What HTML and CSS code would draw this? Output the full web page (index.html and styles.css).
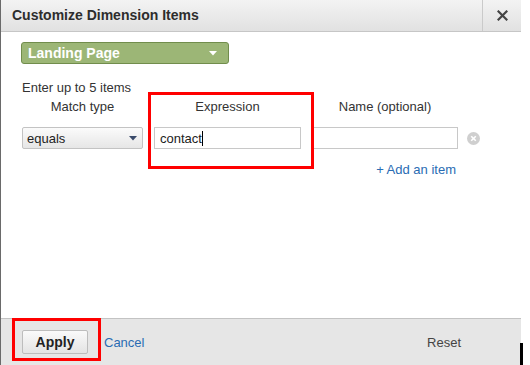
FILE: index.html
```html
<!DOCTYPE html>
<html>
<head>
<meta charset="utf-8">
<link rel="stylesheet" href="styles.css">
</head>
<body>
<div class="dialog">
  <div class="header">
    <div class="title">Customize Dimension Items</div>
    <div class="close">
      <svg width="11" height="11" viewBox="0 0 11 11"><path d="M1.5 1.5 L9.5 9.5 M9.5 1.5 L1.5 9.5" stroke="#444" stroke-width="2.2" stroke-linecap="square"/></svg>
    </div>
  </div>
  <div class="body">
    <div class="dim-btn">
      <span>Landing Page</span>
      <svg width="8" height="5" viewBox="0 0 8 5"><path d="M0 0 H8 L4 4.5 Z" fill="#fff"/></svg>
    </div>
    <div class="hint">Enter up to 5 items</div>
    <div class="grid">
      <div class="label">Match type</div>
      <div class="label">Expression</div>
      <div class="label">Name (optional)</div>
      <div></div>
      <div class="select"><span>equals</span><svg width="8" height="5" viewBox="0 0 8 5"><path d="M0 0 H8 L4 4.5 Z" fill="#3a4a6a"/></svg></div>
      <div class="input"><span>contact</span><span class="caret"></span></div>
      <div class="input"></div>
      <div class="remove"><svg width="13" height="13" viewBox="0 0 13 13"><circle cx="6.5" cy="6.5" r="6.5" fill="#cfcfcf"/><path d="M4.2 4.2 L8.8 8.8 M8.8 4.2 L4.2 8.8" stroke="#fff" stroke-width="1.6"/></svg></div>
    </div>
    <div class="add-row"><span class="add">+ Add an item</span></div>
  </div>
  <div class="footer">
    <button class="apply">Apply</button>
    <span class="cancel">Cancel</span>
    <span class="reset">Reset</span>
  </div>
  <div class="mark mark-expr"></div>
  <div class="mark mark-apply"></div>
</div>
<div class="edge"></div>
</body>
</html>
```
FILE: styles.css
```css
html, body {
  margin: 0;
  padding: 0;
  background: #fff;
  width: 530px;
  height: 365px;
  overflow: hidden;
  font-family: "Liberation Sans", Arial, sans-serif;
  color: #333;
}
.dialog {
  position: relative;
  width: 520px;
  height: 365px;
  border-left: 1px solid #6a6a6a;
  display: flex;
  flex-direction: column;
  background: #fff;
}
.header {
  height: 31px;
  border-bottom: 1px solid #c6c6c6;
  background: linear-gradient(#f3f3f3, #e1e1e1);
  display: flex;
  align-items: stretch;
}
.title {
  flex: 1;
  padding-left: 11px;
  font-size: 14px;
  font-weight: bold;
  color: #2d2d2d;
  line-height: 31px;
}
.close {
  width: 38px;
  border-left: 1px solid #cacaca;
  display: flex;
  align-items: center;
  justify-content: center;
}
.body {
  flex: 1;
  padding: 10px 0 0 20px;
}
.dim-btn {
  box-sizing: border-box;
  width: 208px;
  height: 22px;
  background: #9cb676;
  border: 1px solid #718d4c;
  border-radius: 3px;
  display: flex;
  align-items: center;
  justify-content: space-between;
  padding: 0 11px 0 6px;
  color: #fff;
  font-weight: bold;
  font-size: 14px;
}
.hint {
  margin-top: 16px;
  margin-left: 1px;
  font-size: 13px;
  line-height: 15px;
}
.grid {
  display: grid;
  grid-template-columns: 121px 147px 146px 22px;
  column-gap: 11px;
  margin-left: 1px;
  margin-top: 4px;
  row-gap: 13px;
}
.grid .label {
  text-align: center;
  font-size: 13px;
  line-height: 15px;
}
.select {
  box-sizing: border-box;
  height: 22px;
  border: 1px solid #c3c3c3;
  border-radius: 2px;
  background: linear-gradient(#fbfbfb, #e6e6e6);
  display: flex;
  align-items: center;
  justify-content: space-between;
  padding: 0 5px 0 4px;
  font-size: 13px;
  color: #222;
}
.input {
  box-sizing: border-box;
  height: 22px;
  border: 1px solid #c8c8c8;
  background: #fff;
  display: flex;
  align-items: center;
  padding-left: 5px;
  font-size: 13px;
  color: #222;
}
.caret {
  display: inline-block;
  width: 1px;
  height: 15px;
  background: #000;
}
.remove {
  display: flex;
  align-items: center;
  padding-left: 3px;
  margin-left: -5px;
}
.add-row {
  display: flex;
  justify-content: flex-end;
  width: 435px;
  margin-top: 13px;
}
.add {
  color: #2a6cb3;
  font-size: 13px;
}
.footer {
  height: 46px;
  border-top: 1px solid #c3c3c3;
  background: #e6e6e6;
  display: flex;
  align-items: center;
  padding-left: 21px;
}
.apply {
  width: 66px;
  height: 24px;
  margin: 0;
  padding: 0;
  border: 1px solid #bdbdbd;
  border-radius: 2px;
  background: linear-gradient(#fafafa, #e4e4e4);
  font-family: "Liberation Sans", Arial, sans-serif;
  font-weight: bold;
  font-size: 14px;
  color: #222;
}
.cancel {
  margin-left: 16px;
  color: #2a6cb3;
  font-size: 13px;
}
.reset {
  margin-left: auto;
  margin-right: 60px;
  font-size: 13px;
  color: #444;
}
.mark {
  position: absolute;
  border: 3px solid #ff0000;
  box-sizing: border-box;
}
.mark-expr {
  left: 147px;
  top: 92px;
  width: 166px;
  height: 77px;
}
.mark-apply {
  left: 11px;
  top: 318px;
  width: 89px;
  height: 43px;
}
.edge {
  position: absolute;
  left: 520px;
  top: 343px;
  width: 3px;
  height: 22px;
  background: #000;
}
```
